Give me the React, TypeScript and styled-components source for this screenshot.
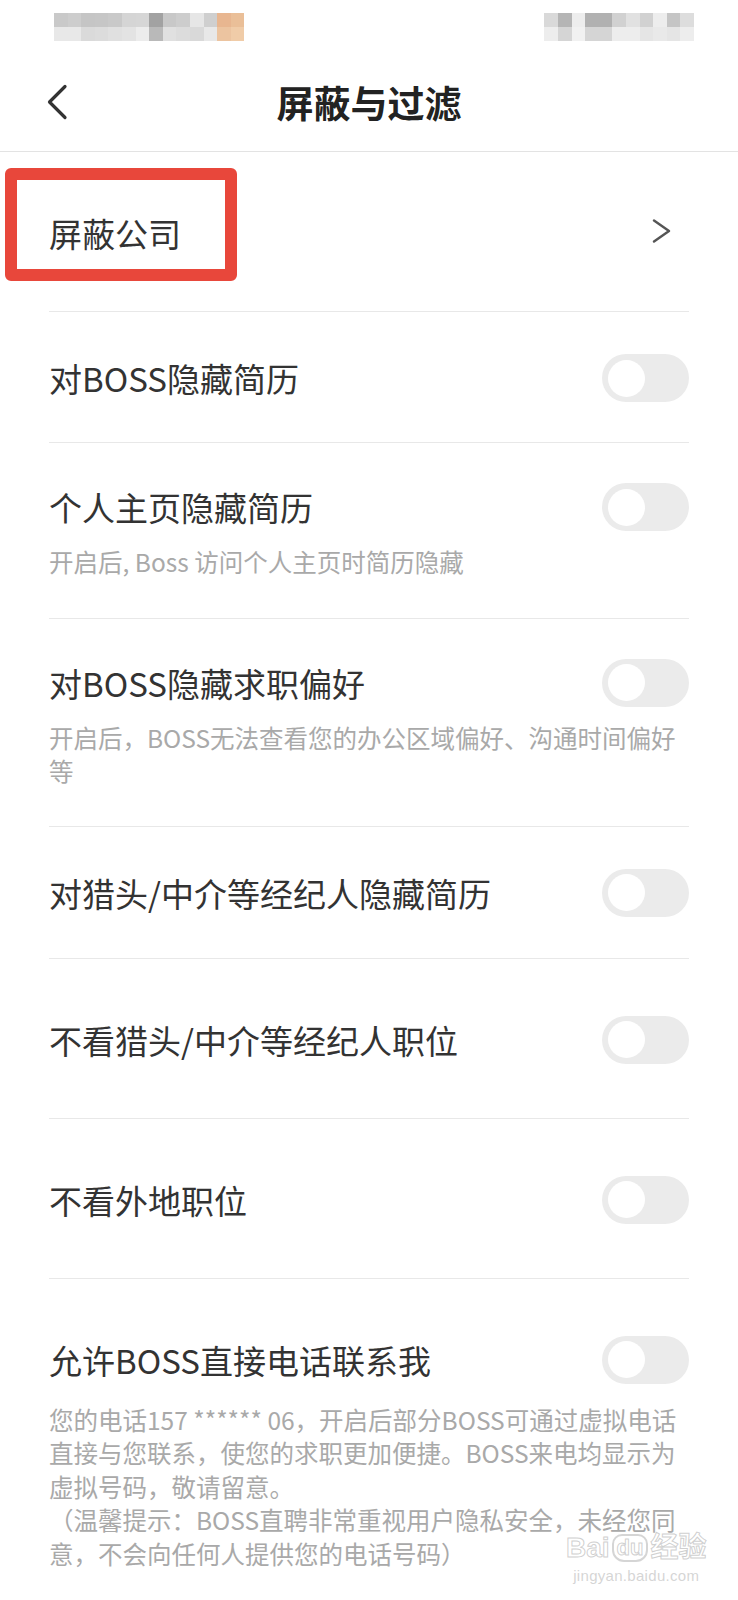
import React from "react";
import styled, { createGlobalStyle } from "styled-components";

const GlobalStyle = createGlobalStyle`
  html, body { margin: 0; padding: 0; background: #ffffff; }
  body {
    font-family: "Noto Sans CJK SC", "Noto Sans", sans-serif;
    -webkit-font-smoothing: antialiased;
  }
  * { box-sizing: border-box; }
`;

const Page = styled.div`
  position: relative;
  width: 738px;
  min-height: 1600px;
  background: #ffffff;
  overflow: hidden;
`;

const StatusBar = styled.div`
  height: 53px;
  display: flex;
  justify-content: space-between;
  align-items: flex-start;
  padding: 13px 44px 0 54px;
`;

const Mosaic = styled.div<{ $cols: number }>`
  display: grid;
  grid-template-columns: repeat(${(p) => p.$cols}, 13.6px);
  grid-auto-rows: 14px;
  filter: blur(0.5px);
`;

const Cell = styled.span<{ $c: string }>`
  display: block;
  background: ${(p) => p.$c};
`;

const NavBar = styled.header`
  height: 99px;
  display: grid;
  grid-template-columns: 1fr auto 1fr;
  align-items: center;
  border-bottom: 1px solid #e3e3e3;
`;

const BackButton = styled.button`
  justify-self: start;
  margin-left: 46px;
  padding: 0;
  border: none;
  background: transparent;
  display: flex;
  color: #333333;
`;

const Title = styled.h1`
  margin: 0;
  font-size: 37px;
  font-weight: 700;
  line-height: 48px;
  color: #222222;
`;

const List = styled.main`
  padding: 0 49px;
`;

const Row = styled.section<{ $top: number; $bottom: number }>`
  position: relative;
  display: grid;
  grid-template-columns: 1fr auto;
  align-items: center;
  padding: ${(p) => p.$top}px 0 ${(p) => p.$bottom}px;
  border-bottom: 1px solid #e8e8e8;
  &:last-child {
    border-bottom: none;
  }
`;

const Label = styled.div`
  font-size: 33px;
  line-height: 48px;
  color: #333333;
`;

const Desc = styled.p<{ $gap: number; $lines?: boolean }>`
  grid-column: 1 / -1;
  margin: ${(p) => p.$gap}px 0 0;
  font-size: 24.5px;
  line-height: 33.5px;
  color: #a9a9a9;
  white-space: ${(p) => (p.$lines ? "nowrap" : "normal")};
`;

const Toggle = styled.span`
  position: relative;
  display: block;
  width: 87px;
  height: 48px;
  border-radius: 24px;
  background: #ebebeb;
  &::after {
    content: "";
    position: absolute;
    left: 6px;
    top: 5.5px;
    width: 37px;
    height: 37px;
    border-radius: 50%;
    background: #ffffff;
  }
`;

const Chevron = styled.svg`
  margin-right: 17px;
  margin-bottom: 4px;
  color: #555555;
`;

const Highlight = styled.div`
  position: absolute;
  left: -44px;
  top: 16px;
  width: 232px;
  height: 113px;
  border: 12px solid #e8473b;
  border-radius: 6px;
  pointer-events: none;
`;

const Watermark = styled.div`
  position: absolute;
  left: 566px;
  top: 1533px;
  display: flex;
  flex-direction: column;
  align-items: center;
  pointer-events: none;
`;

const WmBrand = styled.div`
  display: flex;
  align-items: center;
  gap: 2px;
  font-family: "Liberation Sans", Arial, "Noto Sans CJK SC", sans-serif;
  font-size: 28px;
  font-weight: 700;
  line-height: 30px;
  color: rgba(255, 255, 255, 0.55);
  -webkit-text-stroke: 1px rgba(175, 175, 175, 0.6);
`;

const WmDu = styled.span`
  display: inline-block;
  padding: 0 3px;
  border: 2px solid rgba(185, 185, 185, 0.6);
  border-radius: 10px 10px 12px 12px;
  font-size: 22px;
  line-height: 24px;
`;

const WmUrl = styled.div`
  margin-top: 5px;
  font-family: "Liberation Sans", Arial, sans-serif;
  font-size: 15px;
  line-height: 16px;
  color: rgba(195, 195, 195, 0.7);
  letter-spacing: 0.3px;
`;

const leftTop = ["#c9c9c9", "#cdcdcd", "#c5c5c5", "#c6c6c6", "#c9c9c9", "#d5d5d5", "#d6d6d6", "#a2a2a2", "#c8c8c8", "#cdcdcd", "#e6e6e6", "#cfcfcf", "#e8b690", "#eabf98"];
const leftBottom = ["#e8e8e8", "#e8e8e8", "#dadada", "#dcdcdc", "#e0e0e0", "#e3e3e3", "#ececec", "#b9b9b9", "#e0e0e0", "#dcdcdc", "#d9d9d9", "#e8e8e8", "#ecc4a0", "#f0cca8"];
const rightTop = ["#d9d9d9", "#b5b5b5", "#ededed", "#b1b1b1", "#b1b1b1", "#d1d1d1", "#e1e1e1", "#d1d1d1", "#ededed", "#c5c5c5", "#dddddd"];
const rightBottom = ["#ededed", "#d5d5d5", "#f1f1f1", "#d5d5d5", "#d5d5d5", "#ededed", "#ededed", "#e5e5e5", "#e9e9e9", "#e5e5e5", "#ededed"];

function MosaicBlock({ top, bottom }: { top: string[]; bottom: string[] }) {
  return (
    <Mosaic $cols={top.length}>
      {[...top, ...bottom].map((c, i) => (
        <Cell key={i} $c={c} />
      ))}
    </Mosaic>
  );
}

type Item = {
  label: string;
  desc?: React.ReactNode;
  lines?: boolean;
  top: number;
  bottom: number;
  gap?: number;
};

const items: Item[] = [
  { label: "对BOSS隐藏简历", top: 42, bottom: 40 },
  {
    label: "个人主页隐藏简历",
    desc: "开启后, Boss 访问个人主页时简历隐藏",
    top: 40,
    bottom: 39,
    gap: 14,
  },
  {
    label: "对BOSS隐藏求职偏好",
    desc: "开启后，BOSS无法查看您的办公区域偏好、沟通时间偏好等",
    top: 40,
    bottom: 38,
    gap: 14,
  },
  { label: "对猎头/中介等经纪人隐藏简历", top: 42, bottom: 41 },
  { label: "不看猎头/中介等经纪人职位", top: 57, bottom: 54 },
  { label: "不看外地职位", top: 57, bottom: 54 },
  {
    label: "允许BOSS直接电话联系我",
    lines: true,
    desc: (
      <>
        您的电话157 ****** 06，开启后部分BOSS可通过虚拟电话
        <br />
        直接与您联系，使您的求职更加便捷。BOSS来电均显示为
        <br />
        虚拟号码，敬请留意。
        <br />
        （温馨提示：BOSS直聘非常重视用户隐私安全，未经您同
        <br />
        意，不会向任何人提供您的电话号码）
      </>
    ),
    top: 57,
    bottom: 40,
    gap: 19,
  },
];

export default function App() {
  return (
    <Page>
      <GlobalStyle />
      <StatusBar>
        <MosaicBlock top={leftTop} bottom={leftBottom} />
        <MosaicBlock top={rightTop} bottom={rightBottom} />
      </StatusBar>
      <NavBar>
        <BackButton aria-label="返回">
          <svg width="22" height="36" viewBox="0 0 22 36" fill="none">
            <path d="M19 2.5 L3.5 18 L19 33.5" stroke="currentColor" strokeWidth="3.2" strokeLinecap="round" strokeLinejoin="round" />
          </svg>
        </BackButton>
        <Title>屏蔽与过滤</Title>
        <span />
      </NavBar>
      <List>
        <Row $top={57} $bottom={54}>
          <Label>屏蔽公司</Label>
          <Chevron width="20" height="24" viewBox="0 0 20 24" fill="none">
            <path d="M2 1.5 L17 12 L2 22.5" stroke="currentColor" strokeWidth="2.4" strokeLinecap="round" strokeLinejoin="round" />
          </Chevron>
          <Highlight />
        </Row>
        {items.map((it) => (
          <Row key={it.label} $top={it.top} $bottom={it.bottom}>
            <Label>{it.label}</Label>
            <Toggle role="switch" aria-checked="false" />
            {it.desc && (
              <Desc $gap={it.gap ?? 14} $lines={it.lines}>
                {it.desc}
              </Desc>
            )}
          </Row>
        ))}
      </List>
      <Watermark>
        <WmBrand>
          Bai<WmDu>du</WmDu>经验
        </WmBrand>
        <WmUrl>jingyan.baidu.com</WmUrl>
      </Watermark>
    </Page>
  );
}
